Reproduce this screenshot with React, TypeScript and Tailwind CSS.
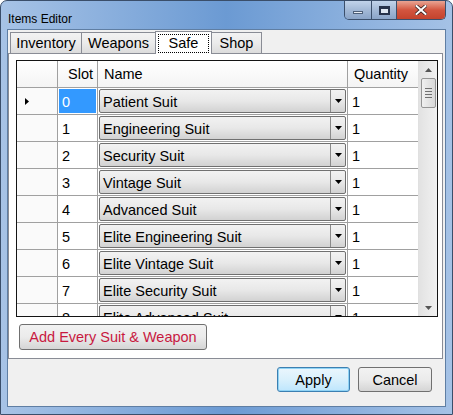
import React from 'react'

const items = [
  'Patient Suit',
  'Engineering Suit',
  'Security Suit',
  'Vintage Suit',
  'Advanced Suit',
  'Elite Engineering Suit',
  'Elite Vintage Suit',
  'Elite Security Suit',
  'Elite Advanced Suit',
]

const tabs = [
  { name: 'Inventory', w: 'w-[72px]' },
  { name: 'Weapons', w: 'w-[75px]' },
  { name: 'Safe', w: 'w-[57px]' },
  { name: 'Shop', w: 'w-[51px]' },
]

const font = { fontFamily: '"Liberation Sans", Arial, sans-serif' }

function DropArrow() {
  return (
    <svg width="7" height="4" viewBox="0 0 7 4">
      <path d="M0 0h7L3.5 4z" fill="#000" />
    </svg>
  )
}

function ComboCell({ label }: { label: string }) {
  return (
    <div className="w-[250px] h-full border-r border-[#a0a0a0] p-px">
      <div className="h-full flex rounded-[2px] border border-[#707070] bg-gradient-to-b from-[#f2f2f2] via-[#e8e8e8] to-[#d2d2d2]">
        <div className="flex-1 flex items-center pl-[3px] pt-px truncate">{label}</div>
        <div className="w-[15px] border-l border-[#8a8a8a] flex items-center justify-center">
          <DropArrow />
        </div>
      </div>
    </div>
  )
}

function Row({ slot, label }: { slot: number; label: string }) {
  const current = slot === 0
  return (
    <div className="flex h-[27px] shrink-0 border-b border-[#a0a0a0]">
      <div className="w-[41px] border-r border-[#a0a0a0] bg-[#fafafa] flex items-center pl-[8px]">
        {current && (
          <svg width="4" height="7" viewBox="0 0 4 7">
            <path d="M0 0l4 3.5L0 7z" fill="#000" />
          </svg>
        )}
      </div>
      <div className="w-[40px] border-r border-[#a0a0a0] p-px">
        <div className={`h-full flex items-center pl-[3px] pt-px ${current ? 'bg-[#3399ff] text-white' : ''}`}>{slot}</div>
      </div>
      <ComboCell label={label} />
      <div className="w-[70px] flex items-center pl-[4px] pt-px">1</div>
    </div>
  )
}

function ScrollBar() {
  return (
    <div className="w-[20px] h-full bg-gradient-to-r from-[#e2e2e2] to-[#f1f1f1] border-l border-[#e0e0e0] flex flex-col items-center">
      <div className="h-[17px] w-full flex items-center justify-center">
        <svg width="7" height="4" viewBox="0 0 7 4">
          <path d="M0 4L3.5 0L7 4z" fill="#555" />
        </svg>
      </div>
      <div className="w-[15px] h-[30px] rounded-[2px] border border-[#959595] bg-gradient-to-r from-[#f0f0f0] to-[#d8d8d8] flex flex-col items-center justify-center gap-[2px]">
        <div className="w-[7px] h-px bg-[#707070]" />
        <div className="w-[7px] h-px bg-[#707070]" />
        <div className="w-[7px] h-px bg-[#707070]" />
        <div className="w-[7px] h-px bg-[#707070]" />
      </div>
      <div className="flex-1" />
      <div className="h-[17px] w-full flex items-center justify-center">
        <svg width="7" height="4" viewBox="0 0 7 4">
          <path d="M0 0h7L3.5 4z" fill="#555" />
        </svg>
      </div>
    </div>
  )
}

function CaptionButtons() {
  return (
    <div className="flex h-[19px] rounded-b-[5px] border border-t-0 border-[#3b4f6b] overflow-hidden">
      <div className="w-[27px] bg-gradient-to-b from-[#c1d3ea] via-[#a3b9d6] to-[#8aa4c8] border-r border-[#3b4f6b] flex items-center justify-center">
        <div className="w-[10px] h-[3px] bg-[#e9eef5] border border-[#4d5f78] mt-[5px]" />
      </div>
      <div className="w-[25px] bg-gradient-to-b from-[#c1d3ea] via-[#a3b9d6] to-[#8aa4c8] border-r border-[#3b4f6b] flex items-center justify-center">
        <div className="w-[11px] h-[9px] border-2 border-t-[3px] border-[#26324a] bg-[#dfe7f1]" />
      </div>
      <div className="w-[48px] bg-gradient-to-b from-[#e8a493] via-[#d2553f] to-[#c4432d] flex items-center justify-center">
        <svg width="12" height="10" viewBox="0 0 12 10">
          <path d="M1.5 1l9 8M10.5 1l-9 8" stroke="#3a2220" strokeWidth="3.6" strokeLinecap="square" />
          <path d="M1.5 1l9 8M10.5 1l-9 8" stroke="#fff" strokeWidth="2" strokeLinecap="square" />
        </svg>
      </div>
    </div>
  )
}

export default function App() {
  return (
    <div className="w-[453px] h-[415px] overflow-hidden bg-white" style={font}>
      <div className="w-full h-full flex flex-col rounded-t-[7px] border border-[#3a4e6a] bg-gradient-to-r from-[#a7c3e6] via-[#6b9ad3] to-[#a5c2e6] px-[6px] pb-[7px]">
        <div className="h-[28px] flex items-start">
          <div className="flex-1 pl-[1px] pt-[11px] text-[12px] leading-[14px] text-black">Items Editor</div>
          <CaptionButtons />
        </div>
        <div className="flex-1 flex flex-col bg-[#f0f0f0] border border-[#5f7ea3] text-[14.5px] leading-[16px] text-black">
          <div className="flex items-end h-[23px] pl-[2px]">
            {tabs.map((t) =>
              t.name === 'Safe' ? (
                <div key={t.name} className={`${t.w} h-[23px] -mb-px -ml-px z-10 bg-white border border-b-0 border-[#898c95] px-[2px] pt-[2px]`}>
                  <div className="border border-dotted border-black text-center text-[14.5px] leading-[17px]">{t.name}</div>
                </div>
              ) : (
                <div key={t.name} className={`${t.w} h-[21px] bg-gradient-to-b from-[#f3f3f3] via-[#ebebeb] to-[#dcdcdc] border border-b-0 border-[#898c95] text-center pt-[2px] text-[14.5px] leading-[16px] -ml-px first:ml-0`}>{t.name}</div>
              )
            )}
          </div>
          <div className="h-[306px] bg-white border border-[#898c95] mr-[2px] pl-[7px] pr-[4px] pt-[6px] flex flex-col">
            <div className="h-[257px] border border-[#141414] flex overflow-hidden">
              <div className="w-[402px] flex flex-col">
                <div className="flex h-[27px] shrink-0 border-b border-[#a0a0a0] bg-gradient-to-b from-white to-[#f4f4f4]">
                  <div className="w-[41px] border-r border-[#a0a0a0]" />
                  <div className="w-[40px] border-r border-[#a0a0a0] flex items-center justify-end pr-[4px]">Slot</div>
                  <div className="w-[250px] border-r border-[#a0a0a0] flex items-center pl-[6px]">Name</div>
                  <div className="w-[70px] flex items-center pl-[6px]">Quantity</div>
                </div>
                {items.map((label, i) => (
                  <Row key={label} slot={i} label={label} />
                ))}
              </div>
              <ScrollBar />
            </div>
            <div className="pl-[3px] pt-[7px]">
              <button className="h-[26px] w-[188px] rounded-[3px] border border-[#707070] bg-gradient-to-b from-[#f2f2f2] via-[#ebebeb] to-[#d5d5d5] text-[#c8193f] text-[14.5px] leading-[16px]">
                Add Every Suit &amp; Weapon
              </button>
            </div>
          </div>
          <div className="flex justify-end gap-[8px] pr-[13px] pt-[8px]">
            <button className="h-[25px] w-[73px] rounded-[3px] border border-[#3c7fb1] bg-gradient-to-b from-[#eaf6fd] via-[#d9f0fc] to-[#bee6fd] shadow-[inset_0_0_0_1px_#8fd3f5] text-[14.5px]">Apply</button>
            <button className="h-[25px] w-[74px] rounded-[3px] border border-[#707070] bg-gradient-to-b from-[#f2f2f2] via-[#ebebeb] to-[#d5d5d5] text-[14.5px]">Cancel</button>
          </div>
        </div>
      </div>
    </div>
  )
}
